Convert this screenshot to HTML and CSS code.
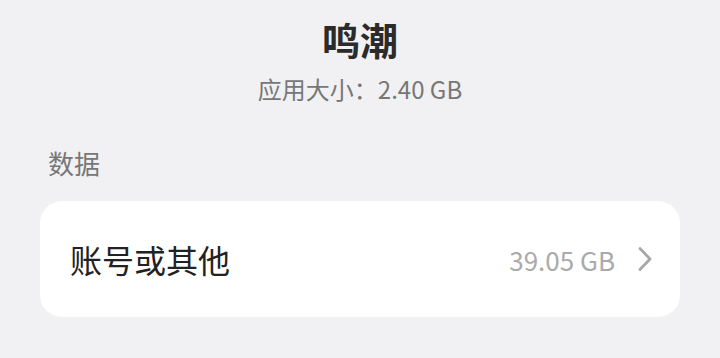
FILE: index.html
```html
<!DOCTYPE html>
<html lang="zh-CN">
<head>
<meta charset="UTF-8">
<meta name="viewport" content="width=device-width, initial-scale=1.0">
<title>鸣潮</title>
<link rel="stylesheet" href="styles.css">
</head>
<body>
<div class="page">
<div class="header">
<h1 class="app-name">鸣潮</h1>
<p class="app-size">应用大小：2.40 GB</p>
</div>
<div class="section-title">数据</div>
<div class="card">
<div class="row">
<span class="row-label">账号或其他</span>
<span class="row-value">39.05 GB</span>
<svg class="chevron" width="16" height="26" viewBox="0 0 16 26">
<path d="M3 2.5 L13 13 L3 23.5" fill="none" stroke="#a8a8a8" stroke-width="2.8" stroke-linecap="round" stroke-linejoin="round"/>
</svg>
</div>
</div>
</div>
</body>
</html>
```

FILE: styles.css
```css
body {
    margin: 0;
    background: #f1f1f3;
    font-family: "Noto Sans CJK SC", "Noto Sans", sans-serif;
}
.page {
    width: 720px;
    height: 358px;
    padding: 0 40px;
    box-sizing: border-box;
}
.header {
    text-align: center;
    padding-top: 14px;
}
.app-name {
    margin: 0;
    font-size: 38px;
    line-height: 50px;
    font-weight: bold;
    color: #2b2b2b;
}
.app-size {
    margin: 8px 0 0;
    font-size: 24px;
    line-height: 34px;
    color: #777;
}
.section-title {
    margin-top: 39px;
    padding-left: 8px;
    font-size: 26px;
    line-height: 36px;
    color: #777;
}
.card {
    margin-top: 20px;
    background: #fff;
    border-radius: 22px;
    height: 116px;
}
.row {
    display: flex;
    align-items: center;
    height: 100%;
    padding: 0 27px 0 30px;
}
.row-label {
    flex: 1;
    font-size: 32px;
    color: #222;
}
.row-value {
    font-size: 26px;
    color: #aaa;
    margin-right: 22px;
}
```
